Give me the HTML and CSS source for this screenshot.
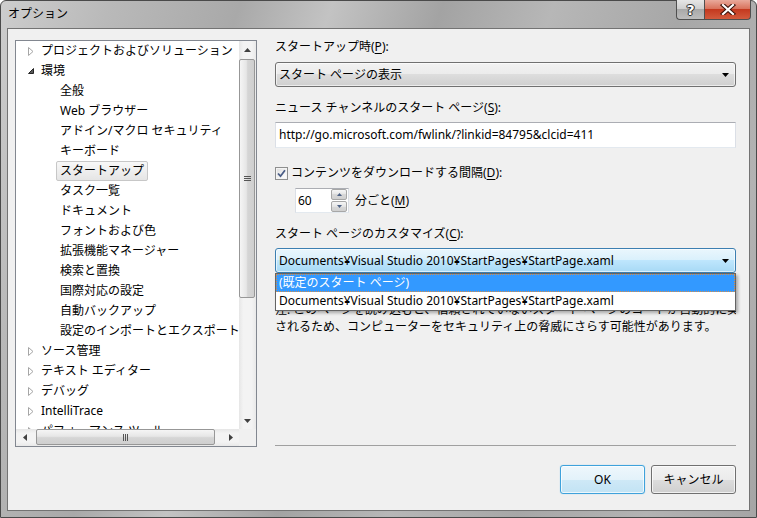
FILE: index.html
```html
<!DOCTYPE html>
<html lang="ja">
<head>
<meta charset="utf-8">
<title>オプション</title>
<link rel="stylesheet" href="styles.css">
</head>
<body>
<div class="window">
  <div class="titlebar">
    <span class="title">オプション</span>
    <div class="caption-btns">
      <div class="cbtn help">?</div>
      <div class="cbtn close">
        <svg width="16" height="11" viewBox="0 0 16 11"><path d="M3 1 L13 10 M13 1 L3 10" stroke="#3a1008" stroke-width="4.2" stroke-linecap="square"/><path d="M3 1 L13 10 M13 1 L3 10" stroke="#fff" stroke-width="2.2" stroke-linecap="square"/></svg>
      </div>
    </div>
  </div>
  <div class="client">
    <div class="main">
      <div class="tree">
        <div class="tree-view">
          <div class="row l0"><span class="arrow"><svg width="6" height="9" viewBox="0 0 6 9"><path d="M0.5 0.5 L5 4.5 L0.5 8.5 Z" fill="#fff" stroke="#a6a6a6"/></svg></span><span class="item">プロジェクトおよびソリューション</span></div>
          <div class="row l0"><span class="arrow"><svg width="6" height="6" viewBox="0 0 6 6"><path d="M5.5 0.5 L5.5 5.5 L0.5 5.5 Z" fill="#595959" stroke="#262626"/></svg></span><span class="item">環境</span></div>
          <div class="row l1"><span class="item">全般</span></div>
          <div class="row l1"><span class="item">Web ブラウザー</span></div>
          <div class="row l1"><span class="item">アドイン/マクロ セキュリティ</span></div>
          <div class="row l1"><span class="item">キーボード</span></div>
          <div class="row l1"><span class="item selected">スタートアップ</span></div>
          <div class="row l1"><span class="item">タスク一覧</span></div>
          <div class="row l1"><span class="item">ドキュメント</span></div>
          <div class="row l1"><span class="item">フォントおよび色</span></div>
          <div class="row l1"><span class="item">拡張機能マネージャー</span></div>
          <div class="row l1"><span class="item">検索と置換</span></div>
          <div class="row l1"><span class="item">国際対応の設定</span></div>
          <div class="row l1"><span class="item">自動バックアップ</span></div>
          <div class="row l1"><span class="item">設定のインポートとエクスポート</span></div>
          <div class="row l0"><span class="arrow"><svg width="6" height="9" viewBox="0 0 6 9"><path d="M0.5 0.5 L5 4.5 L0.5 8.5 Z" fill="#fff" stroke="#a6a6a6"/></svg></span><span class="item">ソース管理</span></div>
          <div class="row l0"><span class="arrow"><svg width="6" height="9" viewBox="0 0 6 9"><path d="M0.5 0.5 L5 4.5 L0.5 8.5 Z" fill="#fff" stroke="#a6a6a6"/></svg></span><span class="item">テキスト エディター</span></div>
          <div class="row l0"><span class="arrow"><svg width="6" height="9" viewBox="0 0 6 9"><path d="M0.5 0.5 L5 4.5 L0.5 8.5 Z" fill="#fff" stroke="#a6a6a6"/></svg></span><span class="item">デバッグ</span></div>
          <div class="row l0"><span class="arrow"><svg width="6" height="9" viewBox="0 0 6 9"><path d="M0.5 0.5 L5 4.5 L0.5 8.5 Z" fill="#fff" stroke="#a6a6a6"/></svg></span><span class="item">IntelliTrace</span></div>
          <div class="row l0"><span class="arrow"><svg width="6" height="9" viewBox="0 0 6 9"><path d="M0.5 0.5 L5 4.5 L0.5 8.5 Z" fill="#fff" stroke="#a6a6a6"/></svg></span><span class="item">パフォーマンス ツール</span></div>
        </div>
        <div class="vscroll">
          <div class="sb-btn"><svg width="7" height="4" viewBox="0 0 7 4"><path d="M3.5 0 L7 4 L0 4 Z" fill="#404040"/></svg></div>
          <div class="vthumb"><svg width="7" height="5" viewBox="0 0 7 5"><path d="M0 0.5 H7 M0 2.5 H7 M0 4.5 H7" stroke="#555" stroke-width="1"/></svg></div>
          <div class="sb-btn bottom"><svg width="7" height="4" viewBox="0 0 7 4"><path d="M0 0 L7 0 L3.5 4 Z" fill="#404040"/></svg></div>
        </div>
        <div class="hscroll">
          <div class="sb-btn"><svg width="4" height="7" viewBox="0 0 4 7"><path d="M0 3.5 L4 0 L4 7 Z" fill="#404040"/></svg></div>
          <div class="hthumb"><svg width="5" height="7" viewBox="0 0 5 7"><path d="M0.5 0 V7 M2.5 0 V7 M4.5 0 V7" stroke="#555" stroke-width="1"/></svg></div>
          <div class="sb-btn right"><svg width="4" height="7" viewBox="0 0 4 7"><path d="M0 0 L4 3.5 L0 7 Z" fill="#404040"/></svg></div>
        </div>
        <div class="corner"></div>
      </div>
      <div class="panel">
        <div class="label">スタートアップ時(<u>P</u>):</div>
        <div class="combo">
          <span class="combo-text">スタート ページの表示</span>
          <svg class="combo-arrow" width="7" height="4" viewBox="0 0 7 4"><path d="M0 0 L7 0 L3.5 4 Z" fill="#000"/></svg>
        </div>
        <div class="label l2">ニュース チャンネルのスタート ページ(<u>S</u>):</div>
        <div class="textbox">http://go.microsoft.com/fwlink/?linkid=84795&amp;clcid=411</div>
        <div class="check-row">
          <span class="checkbox"><svg width="9" height="9" viewBox="0 0 9 9"><path d="M1 4.5 L3.5 7.2 L8 1.2" fill="none" stroke="#4a5d86" stroke-width="1.8"/></svg></span>
          <span>コンテンツをダウンロードする間隔(<u>D</u>):</span>
        </div>
        <div class="spin-row">
          <div class="spin">
            <span class="spin-val">60</span>
            <div class="spin-btns">
              <div class="spin-btn"><svg width="5" height="3" viewBox="0 0 5 3"><path d="M2.5 0 L5 3 L0 3 Z" fill="#4d6185"/></svg></div>
              <div class="spin-btn"><svg width="5" height="3" viewBox="0 0 5 3"><path d="M0 0 L5 0 L2.5 3 Z" fill="#4d6185"/></svg></div>
            </div>
          </div>
          <span class="spin-label">分ごと(<u>M</u>)</span>
        </div>
        <div class="label l3">スタート ページのカスタマイズ(<u>C</u>):</div>
        <div class="combo-wrap">
          <div class="combo hot">
            <span class="combo-text">Documents¥Visual Studio 2010¥StartPages¥StartPage.xaml</span>
            <svg class="combo-arrow" width="7" height="4" viewBox="0 0 7 4"><path d="M0 0 L7 0 L3.5 4 Z" fill="#000"/></svg>
          </div>
          <div class="dropdown">
            <div class="opt active">(既定のスタート ページ)</div>
            <div class="opt">Documents¥Visual Studio 2010¥StartPages¥StartPage.xaml</div>
          </div>
        </div>
        <div class="note">
          <div class="note-line">注: このページを読み込むと、信頼されていないスタート ページのコードが自動的に実行</div>
          <div class="note-line">されるため、コンピューターをセキュリティ上の脅威にさらす可能性があります。</div>
        </div>
        <div class="separator"></div>
      </div>
    </div>
    <div class="buttons">
      <div class="btn default">OK</div>
      <div class="btn">キャンセル</div>
    </div>
  </div>
</div>
</body>
</html>
```

FILE: styles.css
```css
html, body {
  margin: 0;
  padding: 0;
}
body {
  width: 757px;
  height: 518px;
  overflow: hidden;
  font-family: "Noto Sans", "Noto Sans CJK JP", sans-serif;
  font-size: 12px;
  color: #000;
}
u {
  text-decoration: underline;
  text-underline-offset: 2px;
}
.window {
  width: 757px;
  height: 518px;
  box-sizing: border-box;
  border: 1px solid #4a4a4a;
  border-radius: 6px 6px 0 0;
  padding: 0 6px 6px 6px;
  display: flex;
  flex-direction: column;
  background: linear-gradient(108deg, #cdcdcd 0%, #b9b9b9 12%, #a9a9a9 26%, #c3c3c3 36%, #a3a3a3 48%, #b7b7b7 60%, #a7a7a7 74%, #b3b3b3 88%, #a5a5a5 100%);
}
.titlebar {
  height: 27px;
  display: flex;
  align-items: flex-start;
  margin: 0 -6px;
}
.title {
  margin: 6px 0 0 7px;
  line-height: 14px;
  font-size: 12px;
  color: #000;
}
.caption-btns {
  margin: -1px 5px 0 auto;
  display: flex;
}
.cbtn {
  height: 20px;
  box-sizing: border-box;
  border: 1px solid #4f4f4f;
  border-top: none;
  display: flex;
  align-items: center;
  justify-content: center;
}
.help {
  width: 28px;
  border-radius: 0 0 0 4px;
  border-right: none;
  background: linear-gradient(#e6e6e6, #cfcfcf 45%, #a9a9a9 50%, #bdbdbd);
  color: #fff;
  font-family: "DejaVu Sans", sans-serif;
  font-weight: bold;
  font-size: 14px;
  text-shadow: 0 0 1px #222, 0 0 1px #222, 1px 0 0 #333, -1px 0 0 #333, 0 1px 0 #333, 0 -1px 0 #333;
  line-height: 18px;
}
.close {
  width: 47px;
  border-radius: 0 0 4px 0;
  background: linear-gradient(#e9a99b, #d9735d 45%, #c4391f 50%, #d25a3d 100%);
}
.client {
  flex: 1;
  min-width: 0;
  box-sizing: border-box;
  border: 1px solid #737373;
  background: #f0f0f0;
  padding: 11px 13px 16px 7px;
  display: flex;
  flex-direction: column;
}
.main {
  display: flex;
  height: 407px;
  min-width: 0;
}
.tree {
  flex: none;
  width: 242px;
  height: 407px;
  box-sizing: border-box;
  border: 1px solid #828790;
  background: #fff;
  display: grid;
  grid-template-columns: 223px 17px;
  grid-template-rows: 388px 17px;
}
.tree-view {
  overflow: hidden;
}
.row {
  height: 20px;
  display: flex;
  align-items: center;
  white-space: nowrap;
}
.row.l0 {
  padding-left: 12px;
}
.row.l1 {
  padding-left: 41px;
}
.arrow {
  width: 13px;
  display: flex;
  align-items: center;
}
.item {
  line-height: 18px;
}
.row.l1 .item {
  padding: 0 3px;
  border: 1px solid transparent;
  margin-left: -1px;
}
.row.l1 .item.selected {
  border-color: #c7c7c7;
  border-radius: 2px;
  background: linear-gradient(#f8f8f8, #e5e5e5);
}
.vscroll {
  display: flex;
  flex-direction: column;
  background: linear-gradient(to right, #e6e6e6, #f3f3f3 25%, #f3f3f3 75%, #e9e9e9);
}
.sb-btn {
  height: 17px;
  width: 17px;
  display: flex;
  align-items: center;
  justify-content: center;
}
.sb-btn.bottom {
  margin-top: auto;
}
.sb-btn.right {
  margin-left: auto;
}
.vthumb {
  margin: 1px 1px 0 0;
  height: 239px;
  box-sizing: border-box;
  border: 1px solid #979797;
  border-radius: 2px;
  background: linear-gradient(to right, #f5f5f5, #e6e6e6 45%, #d5d5d5 55%, #cfcfcf);
  display: flex;
  align-items: center;
  justify-content: center;
}
.hscroll {
  display: flex;
  background: linear-gradient(#e6e6e6, #f3f3f3 25%, #f3f3f3 75%, #e9e9e9);
}
.hthumb {
  margin: 0 0 1px 3px;
  width: 179px;
  box-sizing: border-box;
  border: 1px solid #979797;
  border-radius: 2px;
  background: linear-gradient(#f5f5f5, #e6e6e6 45%, #d5d5d5 55%, #cfcfcf);
  display: flex;
  align-items: center;
  justify-content: center;
}
.corner {
  background: #f0f0f0;
}
.panel {
  flex: 1;
  min-width: 0;
  margin-left: 18px;
  display: flex;
  flex-direction: column;
}
.label {
  line-height: 14px;
  height: 14px;
  white-space: nowrap;
}
.label.l2 {
  margin-top: 14px;
}
.label.l3 {
  margin-top: 14px;
}
.combo {
  margin-top: 8px;
  height: 25px;
  box-sizing: border-box;
  border: 1px solid #707070;
  border-radius: 3px;
  background: linear-gradient(#f2f2f2, #ebebeb 50%, #dddddd 50%, #cfcfcf);
  box-shadow: inset 0 0 0 1px rgba(255, 255, 255, 0.6);
  display: flex;
  align-items: center;
  padding: 0 6px 0 3px;
  white-space: nowrap;
}
.combo-text {
  flex: 1;
  line-height: 16px;
}
.combo-wrap {
  position: relative;
  margin-top: 7px;
}
.combo.hot {
  margin-top: 0;
  border-color: #3c7fb1;
  background: linear-gradient(#eaf6fd, #d9f0fc 50%, #bee6fd 50%, #a7d9f5);
}
.dropdown {
  position: absolute;
  top: 100%;
  left: 0;
  right: 0;
  box-sizing: border-box;
  border: 1px solid #646464;
  background: #fff;
  box-shadow: 2px 2px 3px rgba(0, 0, 0, 0.3);
  z-index: 2;
}
.opt {
  height: 18px;
  line-height: 16px;
  box-sizing: border-box;
  padding: 0 2px;
  border: 1px solid transparent;
  white-space: nowrap;
}
.opt.active {
  background: #3399ff;
  color: #fff;
  border: 1px dotted #d98e46;
}
.textbox {
  margin-top: 7px;
  height: 26px;
  box-sizing: border-box;
  border: 1px solid #dbdfe6;
  border-top-color: #abadb3;
  border-bottom-color: #e3e9ef;
  background: #fff;
  padding: 0 3px;
  line-height: 24px;
  white-space: nowrap;
}
.check-row {
  margin-top: 18px;
  height: 14px;
  display: flex;
  align-items: center;
  gap: 3px;
  line-height: 14px;
  white-space: nowrap;
}
.checkbox {
  width: 13px;
  height: 13px;
  box-sizing: border-box;
  border: 1px solid #8e8f8f;
  background: linear-gradient(135deg, #dcdcdc, #f4f4f4 60%, #ffffff);
  box-shadow: inset 0 0 0 1px #f4f4f4;
  display: flex;
  align-items: center;
  justify-content: center;
}
.spin-row {
  margin-top: 8px;
  display: flex;
  align-items: center;
  padding-left: 20px;
  white-space: nowrap;
}
.spin {
  width: 54px;
  height: 25px;
  box-sizing: border-box;
  border: 1px solid #dbdfe6;
  border-top-color: #abadb3;
  border-bottom-color: #e3e9ef;
  background: #fff;
  display: flex;
  align-items: center;
  padding: 0 1px 0 2px;
}
.spin-val {
  flex: 1;
  line-height: 16px;
}
.spin-btns {
  display: flex;
  flex-direction: column;
  gap: 1px;
}
.spin-btn {
  width: 16px;
  height: 11px;
  box-sizing: border-box;
  border: 1px solid #a7a7a7;
  border-radius: 2px;
  background: linear-gradient(#f6f6f6, #e4e4e4 50%, #d8d8d8 50%, #d0d0d0);
  display: flex;
  align-items: center;
  justify-content: center;
}
.spin-label {
  margin-left: 6px;
  line-height: 14px;
}
.note {
  margin-top: 28px;
  min-width: 0;
  overflow: hidden;
}
.note-line {
  line-height: 17px;
  white-space: nowrap;
  overflow: hidden;
}
.separator {
  margin-top: auto;
  margin-bottom: 1px;
  height: 1px;
  background: #a0a0a0;
}
.buttons {
  margin-top: 18px;
  display: flex;
  justify-content: flex-end;
  gap: 6px;
}
.btn {
  width: 85px;
  height: 29px;
  box-sizing: border-box;
  border: 1px solid #707070;
  border-radius: 3px;
  background: linear-gradient(#f2f2f2, #ebebeb 50%, #dddddd 50%, #cfcfcf);
  box-shadow: inset 0 0 0 1px rgba(255, 255, 255, 0.7);
  display: flex;
  align-items: center;
  justify-content: center;
  line-height: 16px;
}
.btn.default {
  border-color: #3fa2db;
  background: linear-gradient(#eef7fc, #e3f2fa 50%, #cfe9f7 50%, #c2e3f4);
  box-shadow: inset 0 0 0 1px rgba(255, 255, 255, 0.7), 0 0 1px #6fc3ee;
}
```
